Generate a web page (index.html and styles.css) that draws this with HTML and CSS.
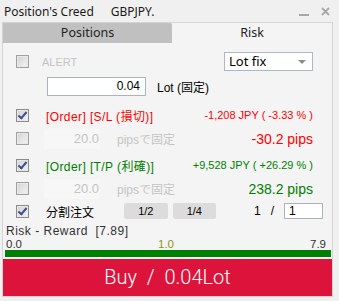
FILE: index.html
```html
<!DOCTYPE html>
<html>
<head>
  <title>Position's Creed</title>
  <link rel="stylesheet" href="styles.css">
</head>
<body>
  <div class="titlebar">
    <span class="title">Position's Creed</span>
    <span class="symbol">GBPJPY.</span>
    <span class="ctrls">
      <svg width="10" height="10" viewBox="0 0 10 10"><rect x="0" y="8" width="10" height="2" fill="#a8a8a8"/></svg>
      <svg width="9" height="9" viewBox="0 0 9 9"><path d="M1 1L8 8M8 1L1 8" stroke="#a8a8a8" stroke-width="1.8"/></svg>
    </span>
  </div>

  <div class="panel">
    <div class="tabs">
      <div class="tab">Positions</div>
      <div class="tab active">Risk</div>
    </div>

    <div class="content">
      <div class="row r1">
        <span class="chk off"></span>
        <span class="alert">ALERT</span>
        <div class="select">Lot fix<span class="arrow"></span></div>
      </div>

      <div class="row r2">
        <div class="input lot">0.04</div>
        <span class="unit">Lot (固定)</span>
      </div>

      <div class="row r3">
        <span class="chk on"></span>
        <span class="order red">[Order] [S/L (損切)]</span>
        <span class="money red">-1,208 JPY ( -3.33 % )</span>
      </div>

      <div class="row r4">
        <span class="chk off"></span>
        <span class="pips-input">20.0</span>
        <span class="pips-label">pipsで固定</span>
        <span class="pips red">-30.2 pips</span>
      </div>

      <div class="row r5">
        <span class="chk on"></span>
        <span class="order green">[Order] [T/P (利確)]</span>
        <span class="money green">+9,528 JPY ( +26.29 % )</span>
      </div>

      <div class="row r6">
        <span class="chk off"></span>
        <span class="pips-input">20.0</span>
        <span class="pips-label">pipsで固定</span>
        <span class="pips green">238.2 pips</span>
      </div>

      <div class="row r7">
        <span class="chk on"></span>
        <span class="split">分割注文</span>
        <span class="btn half">1/2</span>
        <span class="btn">1/4</span>
        <span class="count">1</span>
        <span class="slash">/</span>
        <div class="input count-box">1</div>
      </div>
    </div>

    <div class="rr">
      <div class="rr-label">Risk - Reward&nbsp;&nbsp;[7.89]</div>
      <div class="scale">
        <span>0.0</span>
        <span class="mid">1.0</span>
        <span>7.9</span>
      </div>
      <div class="bar"></div>
    </div>

    <div class="buy">Buy  /  0.04Lot</div>
  </div>
</body>
</html>
```

FILE: styles.css
```css
body {
  margin: 0;
  width: 339px;
  height: 301px;
  overflow: hidden;
  background: #f0f0f0;
  font-family: "Liberation Sans", "Noto Sans CJK JP", sans-serif;
  color: #000;
}

.titlebar {
  height: 22px;
  display: flex;
  align-items: center;
  padding-left: 4px;
  font-family: "Noto Sans", "DejaVu Sans", sans-serif;
  font-size: 12px;
  color: #1a1a1a;
}
.symbol {
  margin-left: 17px;
}
.ctrls {
  margin-left: auto;
  margin-right: 9px;
  display: flex;
  gap: 12px;
  align-items: center;
}

.panel {
  margin-left: 2px;
  width: 329px;
  border: 1px solid #d4d4d4;
  background: #f4f4f4;
}

.tabs {
  display: flex;
  height: 20px;
  font-family: "Noto Sans", "DejaVu Sans", sans-serif;
  font-size: 12.5px;
  color: #222;
}
.tab {
  width: 169px;
  background: #c0c0c0;
  border-top-right-radius: 2px;
  text-align: center;
  line-height: 20px;
}
.tab.active {
  flex: 1;
  background: #f4f4f4;
}

.content {
  padding-top: 9px;
}
.row {
  display: flex;
  align-items: center;
  padding-left: 13px;
  padding-right: 19px;
  font-size: 12px;
  white-space: nowrap;
}
.r1 { height: 19px; }
.r2 { height: 19px; margin-top: 6px; padding-left: 44px; }
.r3 { height: 24px; margin-top: 7px; }
.r4 { height: 23px; }
.r5 { height: 24px; margin-top: 3px; }
.r6 { height: 23px; }
.r7 { height: 22px; }

.chk {
  width: 11px;
  height: 11px;
  border: 1px solid #8c8c8c;
  background: linear-gradient(135deg, #d2d2d2, #f4f4f4);
  box-shadow: inset 0 0 0 1px #e8e8e8;
  position: relative;
  flex: none;
}
.chk.on::after {
  content: "";
  position: absolute;
  left: 3px;
  top: 0px;
  width: 3px;
  height: 7px;
  border: solid #3c4f92;
  border-width: 0 2px 2px 0;
  transform: rotate(40deg);
}
.chk.off {
  border-color: #a0a0a0;
}

.alert {
  margin-left: 13px;
  color: #c4c4c4;
  font-size: 11px;
}
.select {
  margin-left: auto;
  width: 83px;
  height: 17px;
  border: 1px solid #abb8c8;
  background: #fff;
  padding-left: 4px;
  font-family: "Noto Sans", sans-serif;
  font-size: 13px;
  line-height: 17px;
  position: relative;
}
.arrow {
  position: absolute;
  right: 6px;
  top: 7px;
  border-left: 4px solid transparent;
  border-right: 4px solid transparent;
  border-top: 4px solid #8c8c8c;
}

.input {
  background: #fff;
  border: 1px solid #abb3bd;
  box-sizing: border-box;
}
.lot {
  width: 99px;
  height: 19px;
  text-align: right;
  padding-right: 5px;
  font-size: 12px;
  line-height: 17px;
}
.unit {
  margin-left: 11px;
}

.order {
  margin-left: 17px;
  font-size: 12px;
  letter-spacing: 0.4px;
}
.money {
  margin-left: auto;
  font-size: 11px;
}
.pips-input {
  margin-left: 15px;
  width: 55px;
  height: 20px;
  line-height: 20px;
  text-align: right;
  padding-right: 1px;
  background: #f7f7f7;
  color: #c4c4c4;
  font-size: 13px;
}
.pips-label {
  margin-left: 17px;
  color: #c4c4c4;
  font-size: 12px;
}
.pips {
  margin-left: auto;
  font-size: 14px;
}
.red { color: #ff0000; }
.green { color: #008000; }

.split {
  margin-left: 17px;
  font-size: 12px;
}
.btn {
  width: 45px;
  height: 16px;
  line-height: 16px;
  background: #dcdcdc;
  border-radius: 2px;
  text-align: center;
  font-size: 11px;
  margin-left: 5px;
}
.btn.half {
  margin-left: 30px;
}
.count {
  margin-left: 38px;
  font-size: 12px;
}
.slash {
  margin-left: 10px;
  font-size: 12px;
}
.count-box {
  margin-left: 10px;
  width: 40px;
  height: 16px;
  line-height: 14px;
  padding-left: 4px;
  font-size: 12px;
  margin-right: -10px;
}

.rr {
  margin-top: 3px;
  padding: 0 1px 0 2px;
}
.rr-label {
  padding-left: 1px;
  font-size: 12px;
  line-height: 12px;
  letter-spacing: 0.5px;
  color: #333;
}
.scale {
  display: flex;
  justify-content: space-between;
  padding: 1px 5px 0 1px;
  font-size: 11.5px;
  line-height: 12px;
  color: #333;
}
.scale .mid {
  color: #8c9a10;
}
.bar {
  height: 7px;
  background: #008000;
}

.buy {
  margin-top: 2px;
  height: 37px;
  background: #dc143c;
  color: #fff;
  text-align: center;
  line-height: 37px;
  font-family: "Roboto", "Noto Sans", sans-serif;
  font-weight: 300;
  font-size: 20px;
  white-space: pre;
}
```
